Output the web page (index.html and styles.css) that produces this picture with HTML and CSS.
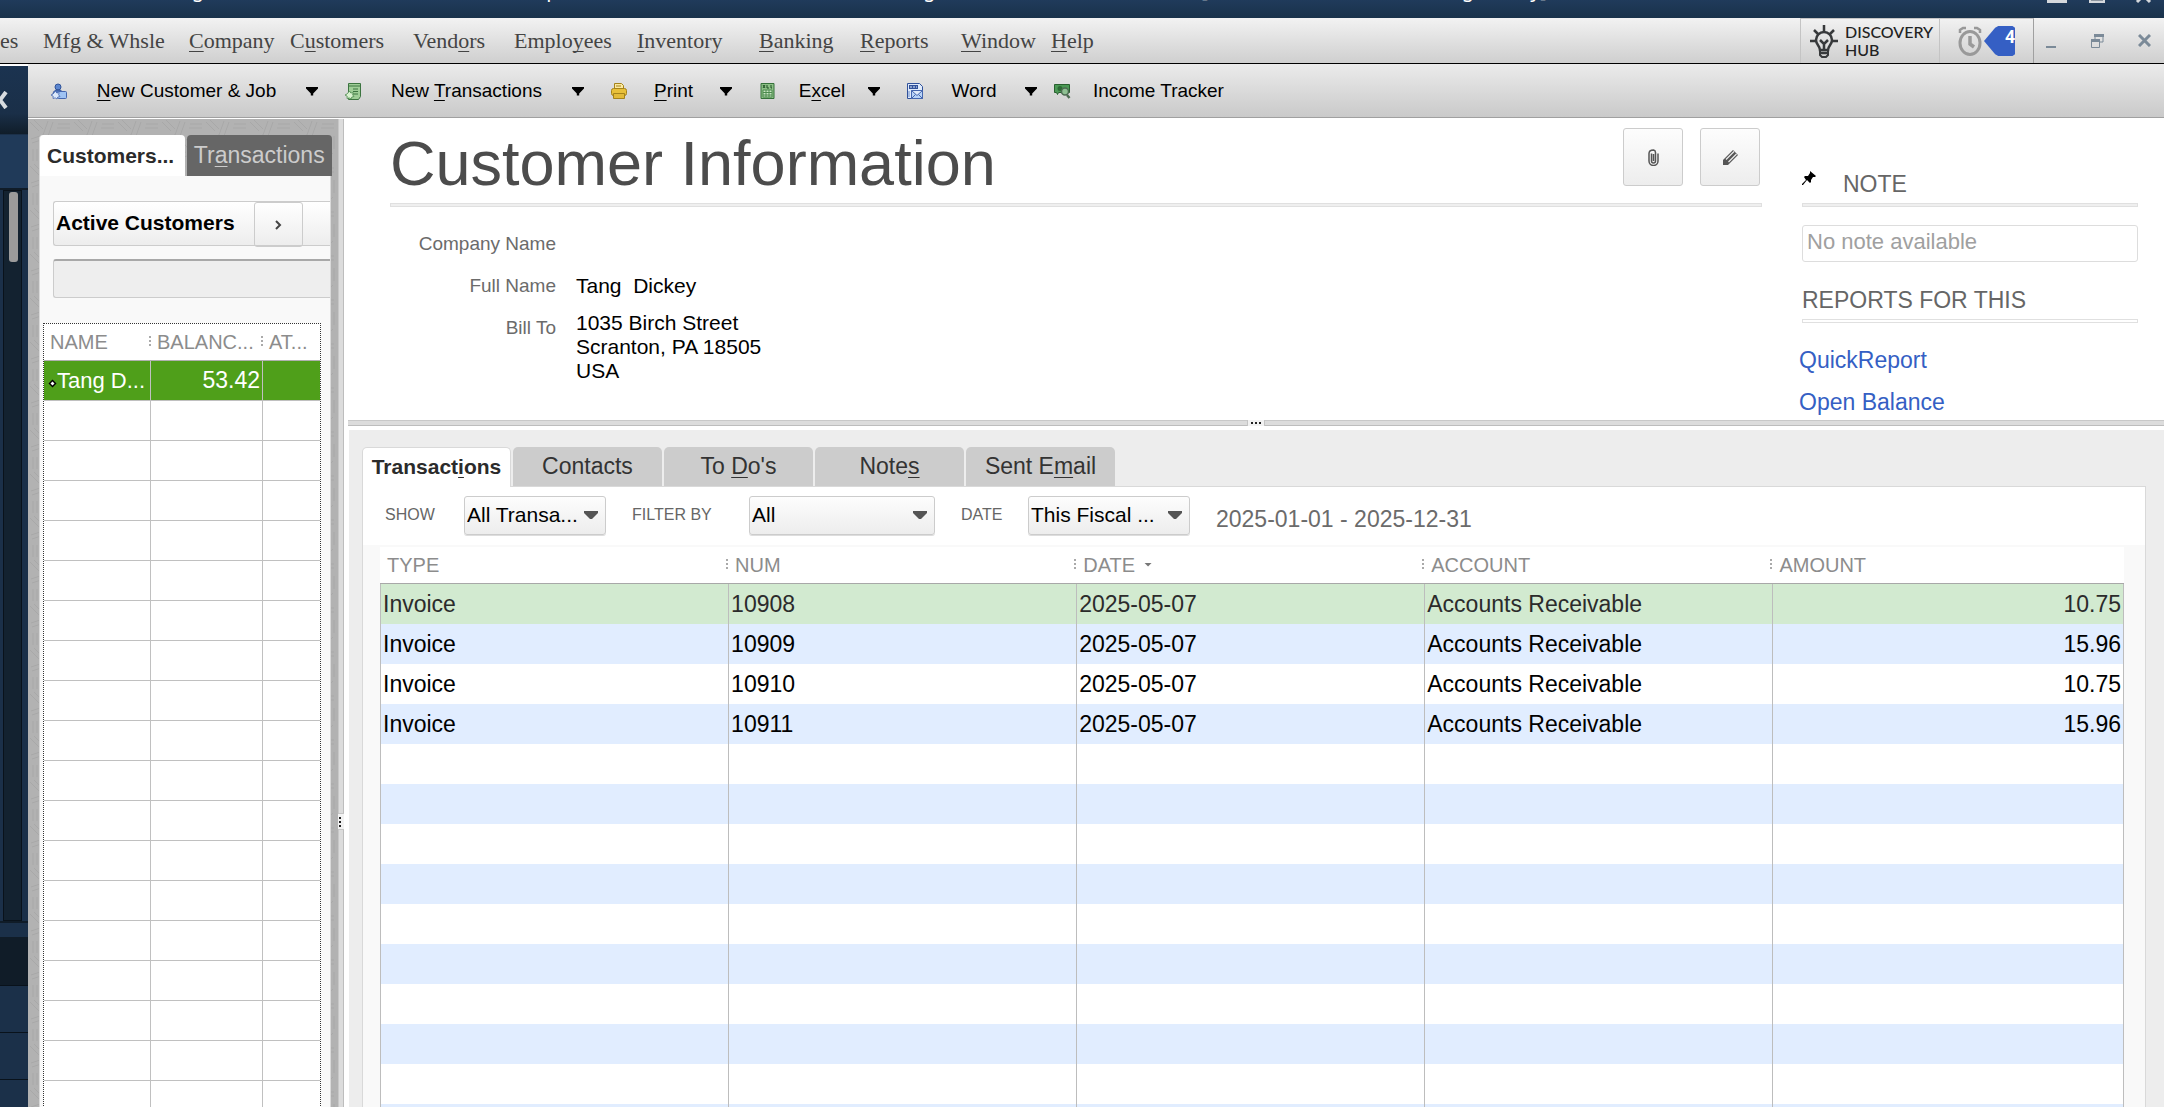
FILE: index.html
```html
<!DOCTYPE html>
<html lang="en">
<head>
<meta charset="utf-8">
<title>Customer Center: Tang Dickey</title>
<link rel="stylesheet" href="styles.css">
</head>
<body>
<div class="app">
  <header class="titlebar">
    <div class="titlebar-text"><span>Trading</span><span>QuickBooks Enterprise</span><span>Manufacturing</span><span>[Customer Information: Tang Dickey]</span></div>
    <svg class="titlebar-buttons" width="106" height="4" viewBox="0 0 106 4" aria-hidden="true"><path fill="#d5d8dc" d="M0 0h20v3H0zM42 0h16v3H42z"/><path fill="#8b949e" d="M44 0h12v1H44z"/><path d="M90 2l3-3M103 2l-3-3" stroke="#d5d8dc" stroke-width="3"/></svg>
  </header>

  <nav class="menubar">
    <ul class="menu">
      <li>es</li>
      <li>Mfg &amp; Whsle</li>
      <li><u>C</u>ompany</li>
      <li>C<u>u</u>stomers</li>
      <li>Vend<u>o</u>rs</li>
      <li>Emplo<u>y</u>ees</li>
      <li><u>I</u>nventory</li>
      <li><u>B</u>anking</li>
      <li><u>R</u>eports</li>
      <li><u>W</u>indow</li>
      <li><u>H</u>elp</li>
    </ul>
    <button class="hub" type="button">
      <svg width="28" height="33" viewBox="0 0 28 33" fill="none" stroke="#37393b" stroke-width="2.5"><path d="M14 0v6M4 5l4 4M24 5l-4 4M0 16h6M22 16h6"/><path d="M10 25c0-4-4-5-4-10a8 8 0 0 1 16 0c0 5-4 6-4 10zM14 24v-6M10 15l4 4 4-4"/><path d="M10 25h8v5l-2 2h-4l-2-2z" stroke-width="2"/><path d="M10 28h8"/></svg>
      <span>DISCOVERY<br>HUB</span>
    </button>
    <button class="alerts" type="button" aria-label="4 reminders">
      <svg width="24" height="31" viewBox="0 0 24 31" fill="none" stroke="#999"><ellipse cx="12" cy="17" rx="10" ry="11.500" stroke-width="3"/><path d="M12 10v8l4 3" stroke-width="3.500"/><path d="M2 7V4l3-2h3M22 7V4l-3-2h-3" stroke-width="2.500"/></svg>
      <span class="badge">4</span>
    </button>
    <div class="window-buttons">
      <button type="button" aria-label="Minimize"><svg width="10" height="14" viewBox="0 0 10 14"><path fill="#7b8a98" d="M0 12h10v2H0z"/></svg></button>
      <button type="button" aria-label="Restore"><svg width="13" height="14" viewBox="0 0 13 14" fill="none" stroke="#7b8a98"><path d="M4 5V2h8v6H9"/><path d="M3 1.500h10M0 6.500h9" stroke-width="3"/><path d="M.5 6v7.500h8V6"/></svg></button>
      <button type="button" aria-label="Close"><svg width="13" height="13" viewBox="0 0 13 13" stroke="#7b8a98" stroke-width="3"><path d="M1 1l11 11M12 1L1 12"/></svg></button>
    </div>
  </nav>

  <div class="workspace">
    <aside class="rail">
      <button class="rail-toggle" type="button" aria-label="Collapse"><svg width="8" height="18" viewBox="0 0 8 18" fill="none" stroke="#d8dce0" stroke-width="4"><path d="M6 1L0 9l6 8"/></svg></button>
      <div class="rail-head"></div>
      <div class="rail-track"><div class="rail-thumb"></div></div>
      <div class="rail-gap"></div>
      <div class="rail-current"></div>
      <div class="rail-item"></div>
      <div class="rail-item"></div>
      <div class="rail-item"></div>
    </aside>

    <div class="center">
      <div class="toolbar">
        <button type="button"><svg width="16" height="17" viewBox="0 0 16 17"><circle cx="7" cy="4" r="3" fill="#5b86cf" stroke="#30539a"/><path d="M2 12c0-4 2-5 5-5s5 1 5 5z" fill="#4d74bd" stroke="#30539a"/><rect x="6.500" y="8.500" width="9" height="7" rx="1" fill="#9fc3f3" stroke="#4566ae"/><path d="M4.500 8l1.300 2 2.400-.4-.6 2.200L9 13.500l-2.200.6L6 16l-1.800-1.100L2 15.500l.2-2.300L0 12l2-1z" fill="#dce9fb" stroke="#4566ae" stroke-width=".8"/></svg><span><u>N</u>ew Customer &amp; Job</span><i class="caret"></i></button>
        <button type="button"><svg width="16" height="17" viewBox="0 0 16 17"><path d="M3.500.5h12v13l-2 3h-10z" fill="#9fce97" stroke="#3c7440"/><path d="M4 3h11M8 6h5M8 8.500h5M8 11h5" stroke="#3c7440"/><path d="M4.500 8l1.300 2 2.400-.4-.6 2.200L9 13.500l-2.200.6L6 16l-1.800-1.100L2 15.500l.2-2.300L0 12l2-1z" fill="#d9f2d0" stroke="#4c8a4e" stroke-width=".8"/></svg><span>New <u>T</u>ransactions</span><i class="caret"></i></button>
        <button type="button"><svg width="16" height="16" viewBox="0 0 16 16" stroke="#a5831a"><path d="M3.500 6V.5h7l2 2V6z" fill="#fbe9a0"/><path d="M5 3h5" /><rect x=".5" y="5.500" width="15" height="7" rx="2" fill="#e8c03a"/><path d="M2.500 10.500h11v5h-11z" fill="#e3bb38"/></svg><span><u>P</u>rint</span><i class="caret"></i></button>
        <button type="button"><svg width="16" height="16" viewBox="0 0 16 16"><path d="M1 .5h13v15H1z" fill="#8cc085" stroke="#35713a"/><path d="M3 2l2 3M5 2L3 5M7 2v3h2M11 2v3h1" stroke="#1f5124" fill="none"/><path d="M3 7h9v7H3z" fill="#c9e6c3" stroke="#4c8a4e"/><path d="M3 9.500h9M3 12h9M6 7v7M9 7v7" stroke="#4c8a4e"/></svg><span>E<u>x</u>cel</span><i class="caret"></i></button>
        <button type="button"><svg width="16" height="16" viewBox="0 0 16 16"><path d="M.5.500h12l3 3v12H.5z" fill="#dfeafa" stroke="#31529b"/><path d="M2 2h9v4H2z" fill="#31529b"/><path d="M3 4h7" stroke="#dfeafa" stroke-dasharray="2 1"/><path d="M2 8v6" stroke="#6f8fcc"/><path d="M4.500 7.500h11v8h-11zM4.500 7.500l5.500 5 5.500-5M4.500 15.500l4-4M15.500 15.500l-4-4" fill="#b8d3f7" stroke="#4566ae"/></svg><span>Word</span><i class="caret"></i></button>
        <button type="button"><svg width="17" height="15" viewBox="0 0 17 15"><path d="M.5.500h15v8h-11l-1 2-1-2h-2z" fill="#4b9955" stroke="#28602f"/><circle cx="6" cy="4.500" r="2.500" fill="#2c6b35"/><circle cx="11" cy="7.500" r="3.500" fill="#8fc193" stroke="#4d6b52" stroke-width="1.500"/><path d="M13 11l2.500 3" stroke="#4d6b52" stroke-width="2.500"/></svg><span>Income Tracker</span></button>
      </div>

      <div class="content">
        <section class="list-pane">
          <div class="list-tabs" role="tablist">
            <button class="is-active" type="button" role="tab">Customers...</button>
            <button type="button" role="tab">Tr<u>a</u>nsactions</button>
          </div>
          <div class="list-body">
            <div class="list-filter">
              <span>Active Customers</span>
              <button type="button" aria-label="More filters"><svg width="7" height="10" viewBox="0 0 7 10" fill="none" stroke="#444" stroke-width="2"><path d="M1 1l4 4-4 4"/></svg></button>
            </div>
            <input class="list-search" type="text" aria-label="Find customer">
            <table class="customers">
              <colgroup><col class="c-name"><col class="c-balance"><col></colgroup>
              <thead><tr><th>NAME</th><th>BALANC...</th><th>AT...</th></tr></thead>
              <tbody>
                <tr class="selected"><td><svg width="9" height="9" viewBox="0 0 9 9"><path d="M4.500.500l4 4-4 4-4-4z" fill="#000"/><path d="M4.500 2.500l2 2-2 2-2-2z" fill="#fff"/></svg>Tang D...</td><td>53.42</td><td></td></tr>
                <tr><td></td><td></td><td></td></tr><tr><td></td><td></td><td></td></tr>
                <tr><td></td><td></td><td></td></tr><tr><td></td><td></td><td></td></tr>
                <tr><td></td><td></td><td></td></tr><tr><td></td><td></td><td></td></tr>
                <tr><td></td><td></td><td></td></tr><tr><td></td><td></td><td></td></tr>
                <tr><td></td><td></td><td></td></tr><tr><td></td><td></td><td></td></tr>
                <tr><td></td><td></td><td></td></tr><tr><td></td><td></td><td></td></tr>
                <tr><td></td><td></td><td></td></tr><tr><td></td><td></td><td></td></tr>
                <tr><td></td><td></td><td></td></tr><tr><td></td><td></td><td></td></tr>
                <tr><td></td><td></td><td></td></tr><tr><td></td><td></td><td></td></tr>
              </tbody>
            </table>
          </div>
        </section>

        <div class="splitter-v"><svg width="6" height="17" viewBox="0 0 6 17"><path d="M0 0h6v17H0z" fill="#f2f2f2"/><path d="M0 .5h6M0 16.500h6" stroke="#c4c4c4"/><path d="M1 4h2v2H1zM1 8h2v2H1zM1 12h2v2H1z" fill="#222"/></svg></div>

        <main class="detail">
          <section class="info">
            <div class="info-main">
              <div class="info-head">
                <h1>Customer Information</h1>
                <button type="button" aria-label="Attach"><svg width="11" height="17" viewBox="0 0 11 17" fill="none" stroke="#555" stroke-width="1.500"><path d="M3.500 4.500v7.500a2 2 0 0 0 4 0V3.500a2.600 2.600 0 0 0-2-2.500C2.500 1 1 2.500 1 4.500v7.500a4.500 4.500 0 0 0 9 0V4.500M5.500 5v7"/></svg></button>
                <button type="button" aria-label="Edit"><svg width="17" height="17" viewBox="0 0 17 17"><path d="M1 16V11L11 1l5 5L6 16z" fill="#555"/><path d="M4 10.500l8-8M6.500 13l8-8" stroke="#eee" stroke-width="1.200"/></svg></button>
              </div>
              <div class="rule"></div>
              <dl class="fields">
                <dt>Company Name</dt><dd></dd>
                <dt>Full Name</dt><dd>Tang&nbsp; Dickey</dd>
                <dt>Bill To</dt><dd class="address">1035 Birch Street<br>Scranton, PA 18505<br>USA</dd>
              </dl>
            </div>
            <div class="info-side">
              <h2 class="note-title"><svg width="14" height="14" viewBox="0 0 14 14"><path d="M8 0l6 5-1 1-2 0-2 3 0 2-1 1-3-3-4 5-1 0 0-1 4-4-2-3 1-1 3 0 2-3z"/></svg><span>NOTE</span></h2>
              <div class="rule"></div>
              <input class="note" type="text" placeholder="No note available" aria-label="Note">
              <h2>REPORTS FOR THIS</h2>
              <div class="rule rule-light"></div>
              <a href="#">QuickReport</a>
              <a href="#">Open Balance</a>
            </div>
          </section>

          <div class="splitter-h"><svg width="18" height="6" viewBox="0 0 18 6"><path d="M0 0h18v6H0z" fill="#f2f2f2"/><path d="M.5 0v6M17.500 0v6" stroke="#c4c4c4"/><path d="M4 2h2v2H4zM8 2h2v2H8zM12 2h2v2h-2z" fill="#222"/></svg></div>

          <section class="lower">
            <div class="tabs" role="tablist">
              <button class="is-active" type="button" role="tab">Transact<u>i</u>ons</button>
              <button type="button" role="tab">Contacts</button>
              <button type="button" role="tab">To <u>D</u>o's</button>
              <button type="button" role="tab">Note<u>s</u></button>
              <button type="button" role="tab">Sent E<u>m</u>ail</button>
            </div>
            <div class="panel">
              <div class="filters">
                <label for="show">SHOW</label>
                <select id="show"><option>All Transa...</option></select>
                <label for="by">FILTER BY</label>
                <select id="by"><option>All</option></select>
                <label for="date">DATE</label>
                <select id="date"><option>This Fiscal ...</option></select>
                <span class="range">2025-01-01 - 2025-12-31</span>
              </div>
              <div class="grid-wrap">
                <table class="transactions">
                  <colgroup><col class="c-equal"><col class="c-equal"><col class="c-equal"><col class="c-equal"><col></colgroup>
                  <thead><tr><th>TYPE</th><th>NUM</th><th>DATE<i class="sort"></i></th><th>ACCOUNT</th><th>AMOUNT</th></tr></thead>
                  <tbody>
                    <tr class="selected"><td>Invoice</td><td>10908</td><td>2025-05-07</td><td>Accounts Receivable</td><td>10.75</td></tr>
                    <tr><td>Invoice</td><td>10909</td><td>2025-05-07</td><td>Accounts Receivable</td><td>15.96</td></tr>
                    <tr><td>Invoice</td><td>10910</td><td>2025-05-07</td><td>Accounts Receivable</td><td>10.75</td></tr>
                    <tr><td>Invoice</td><td>10911</td><td>2025-05-07</td><td>Accounts Receivable</td><td>15.96</td></tr>
                    <tr><td></td><td></td><td></td><td></td><td></td></tr>
                    <tr><td></td><td></td><td></td><td></td><td></td></tr>
                    <tr><td></td><td></td><td></td><td></td><td></td></tr>
                    <tr><td></td><td></td><td></td><td></td><td></td></tr>
                    <tr><td></td><td></td><td></td><td></td><td></td></tr>
                    <tr><td></td><td></td><td></td><td></td><td></td></tr>
                    <tr><td></td><td></td><td></td><td></td><td></td></tr>
                    <tr><td></td><td></td><td></td><td></td><td></td></tr>
                    <tr><td></td><td></td><td></td><td></td><td></td></tr>
                    <tr><td></td><td></td><td></td><td></td><td></td></tr>
                  </tbody>
                </table>
              </div>
            </div>
          </section>
        </main>
      </div>
    </div>
  </div>
</div>
</body>
</html>
```
FILE: styles.css
```css
* { box-sizing: border-box; }

body {
  margin: 0;
  font-family: "Liberation Sans", Arial, sans-serif;
  font-size: 23px;
  color: #000;
}

button, input, select {
  margin: 0;
  padding: 0;
  border: 0;
  background: none;
  font: inherit;
  color: inherit;
}

svg { display: block; flex: none; }

u { text-underline-offset: 3px; text-decoration-thickness: 1px; text-decoration-skip-ink: none; }

.app {
  display: flex;
  flex-direction: column;
  height: 100vh;
  overflow: hidden;
}

/* Title bar: only its lower edge shows */
.titlebar {
  flex: none;
  display: flex;
  justify-content: space-between;
  height: 18px;
  padding-right: 11px;
  overflow: hidden;
  background: linear-gradient(#203b5b, #19324a);
}

.titlebar-text {
  display: grid;
  grid-template-columns: 204px 176px 270px 551px auto;
  height: 28px;
  margin-top: -24px;
  font: 20px/28px "Noto Sans", sans-serif;
  color: #fff;
  white-space: nowrap;
}

.titlebar-text span:nth-child(1) { text-align: right; }
.titlebar-text span:nth-child(2) { grid-column: 3; }
.titlebar-text span:nth-child(3) { grid-column: 4; padding-left: 146px; }
.titlebar-text span:nth-child(4) { grid-column: 5; }

/* Menu bar */
.menubar {
  flex: none;
  display: flex;
  height: 46px;
  border-bottom: 1px solid #000;
  background: linear-gradient(#f2f2f2, #cfcfcf);
}

.menu {
  flex: 1;
  display: grid;
  grid-template-columns: 43px 146px 101px 123px 101px 123px 122px 101px 101px 90px auto;
  margin: 0;
  padding: 0;
  list-style: none;
  font: 22px/46px "Liberation Serif", serif;
  color: #444;
  white-space: nowrap;
}

.hub {
  display: flex;
  align-items: center;
  gap: 7px;
  width: 139px;
  padding-left: 9px;
  border-top: 1px solid #c4c4c4;
  border-left: 1px solid #c4c4c4;
  font: 500 16px/18px Lato, sans-serif;
  text-align: left;
  color: #222;
}

.alerts {
  display: flex;
  align-items: center;
  gap: 2px;
  width: 95px;
  padding-left: 18px;
  border-top: 1px solid #c4c4c4;
  border-left: 1px solid #c4c4c4;
  border-right: 1px solid #a0a0a0;
}

.badge {
  width: 31px;
  height: 30px;
  background: #355fc4;
  clip-path: polygon(0 50%, 36% 6%, 46% 0, 92% 0, 100% 6%, 100% 94%, 92% 100%, 46% 100%, 36% 94%);
  font: bold 17px/22px "Open Sans", sans-serif;
  text-align: right;
  color: #fff;
}

.window-buttons {
  display: flex;
  align-items: center;
  justify-content: space-between;
  width: 130px;
  padding: 0 13px 0 12px;
}

/* Dark rail on the far left */
.workspace { flex: 1; display: flex; min-height: 0; }

.rail {
  flex: none;
  width: 28px;
  border-top: 2px solid #fff;
  background: #1b3049;
}

.rail-toggle {
  display: flex;
  align-items: center;
  width: 28px;
  height: 68px;
  background: linear-gradient(#1b3350, #1a2f48 70%, #101d29);
}

.rail-head {
  height: 56px;
  border-top: 1px solid #1b3049;
  border-bottom: 2px solid #101c28;
  background: #203a59;
}

.rail-track {
  width: 19px;
  height: 731px;
  margin-left: 3px;
  padding: 1px 3px 0 5px;
  border: 1px solid #09121b;
  background: #132230;
}

.rail-thumb { height: 70px; border-radius: 3px; background: #9b9b9b; }
.rail-gap { height: 16px; border-top: 2px solid #101c28; }
.rail-current { height: 48px; background: #101c28; }
.rail-item { height: 47px; border-top: 1px solid #09121b; }

/* Toolbar */
.center { flex: 1; display: flex; flex-direction: column; min-width: 0; }

.toolbar {
  flex: none;
  display: grid;
  grid-template-columns: 294px 266px 149px 147px 147px auto;
  justify-content: start;
  height: 55px;
  padding-left: 23px;
  border-bottom: 1px solid #fff;
  background: linear-gradient(#ebebeb, #c9c9c9);
  box-shadow: inset 0 -1px #a0a0a0;
  font-size: 19px;
}

.toolbar button {
  display: flex;
  align-items: center;
  justify-content: space-between;
  padding-right: 27px;
  white-space: nowrap;
}

.toolbar button:nth-child(3) { padding-right: 28px; }
.toolbar button:nth-child(5) { padding-right: 17px; }
.toolbar button:nth-child(6) { gap: 22px; }

.caret {
  width: 12px;
  height: 9px;
  background: #000;
  clip-path: polygon(0 0, 100% 0, 100% 22%, 60% 78%, 60% 100%, 40% 100%, 40% 78%, 0 22%);
}

/* Customer list */
.content { flex: 1; display: flex; min-height: 0; }

.list-pane {
  flex: none;
  display: flex;
  flex-direction: column;
  width: 310px;
  padding: 16px 6px 0 11px;
  background: #b2b2b2 url("data:image/svg+xml,%3Csvg xmlns='http://www.w3.org/2000/svg' width='44' height='44' fill='none' stroke='%23a8a8a8'%3E%3Cpath d='M2 3l9 9M6 1l9 9M20 2l-5 14M25 3l-5 14M30 5h12M29 9h13M3 20l12-4M4 24l12-4M22 22l8 10M26 20l8 10M38 16v13M42 17v13M5 30v12M9 30v12M14 36l12-3M15 40l12-3M32 42l9-8M28 41l9-8'/%3E%3C/svg%3E");
}

.list-tabs { display: flex; gap: 2px; height: 41px; }

.list-tabs button {
  width: 146px;
  border-radius: 4px 4px 0 0;
  background: #666;
  color: #ccc;
  white-space: nowrap;
}

.list-tabs .is-active {
  padding-left: 7px;
  border-left: 1px solid #d9d9d9;
  background: #fff;
  font-size: 21px;
  font-weight: bold;
  text-align: left;
  color: #2b2b2b;
}

.list-body {
  flex: 1;
  display: flex;
  flex-direction: column;
  min-height: 0;
  width: 292px;
  padding-top: 25px;
  border: solid #d9d9d9;
  border-width: 0 1px;
  background: #f9f9f9;
}

.list-filter {
  flex: none;
  display: flex;
  height: 45px;
  margin-left: 13px;
  border: 1px solid #ccc;
  border-right: 0;
  border-radius: 3px 0 0 3px;
  background: linear-gradient(#fff, #ededed);
  font-size: 21px;
  font-weight: bold;
  line-height: 41px;
  white-space: nowrap;
}

.list-filter span { width: 200px; padding-left: 2px; }

.list-filter button {
  display: flex;
  align-items: center;
  justify-content: center;
  width: 49px;
  height: 45px;
  border: 1px solid #ccc;
  border-radius: 3px;
}

.list-search {
  flex: none;
  height: 39px;
  margin: 13px 0 25px 13px;
  border: 1px solid #ccc;
  border-top: 2px solid #a8a8a8;
  border-right: 0;
  border-radius: 3px 0 0 3px;
  background: #eee;
}

table { table-layout: fixed; border-spacing: 0; }
th { font-size: 20px; font-weight: normal; text-align: left; color: #8c8c8c; }
th, td { padding: 0; white-space: nowrap; overflow: hidden; }

th:not(:last-child) {
  background: repeating-linear-gradient(#aaa 0 2px, transparent 2px 4px) no-repeat right 0 top 12px / 2px 10px;
}

.customers {
  flex: none;
  width: 278px;
  margin-left: 3px;
  border: 1px dotted #333;
  background: #fff;
}

.customers .c-name { width: 107px; }
.customers .c-balance { width: 112px; }
.customers th { height: 37px; padding-left: 6px; border-bottom: 1px solid #b0b0b0; }

.customers td {
  height: 40px;
  border-right: 1px solid #c0c0c0;
  border-bottom: 1px solid #c0c0c0;
  font-size: 22px;
}

.customers td:last-child { border-right: 0; }
.customers td:nth-child(2) { padding-right: 2px; text-align: right; font-size: 23px; }
.customers td:first-child { padding-left: 4px; }
.customers svg { display: inline-block; }
.customers .selected { background: #4f9f1a; color: #fff; }

/* Splitters */
.splitter-v {
  flex: none;
  display: flex;
  align-items: flex-start;
  width: 6px;
  padding-top: 694px;
  background: #dcdcdc;
  box-shadow: inset 1px 0 #c8c8c8, inset -1px 0 #bdbdbd;
}

.splitter-h {
  flex: none;
  display: flex;
  justify-content: center;
  height: 6px;
  margin-bottom: 4px;
  background: #dcdcdc;
  box-shadow: inset 0 1px #c8c8c8, inset 0 -1px #bdbdbd;
}

/* Customer information */
.detail {
  flex: 1;
  display: flex;
  flex-direction: column;
  min-width: 0;
  padding-left: 4px;
  background: #fff;
}

.info {
  flex: 0 0 301px;
  display: flex;
  gap: 40px;
  overflow: hidden;
  padding: 0 26px 0 42px;
}

.info-main { flex: 1; }

.info-head { display: flex; gap: 17px; height: 84px; padding: 9px 2px 0 0; }

h1 {
  flex: 1;
  margin: 3px 0 0;
  font-size: 63px;
  font-weight: normal;
  line-height: 64px;
  color: #4c4c4c;
}

.info-head button {
  display: flex;
  align-items: center;
  justify-content: center;
  width: 60px;
  height: 58px;
  border: 1px solid #ccc;
  border-radius: 3px;
  background: linear-gradient(#fdfdfd, #ededed);
}

.rule { height: 4px; border: 1px solid #e0e0e0; background: #efefef; }
.rule-light { background: #fff; }

.fields {
  display: grid;
  grid-template-columns: 166px auto;
  column-gap: 20px;
  margin: 0;
  padding-top: 16px;
  font-size: 21px;
  line-height: 42px;
}

.fields dt { text-align: right; font-size: 19px; color: #6b6b6b; }
.fields dd { margin: 0; min-height: 42px; }
.fields .address { padding-top: 4px; line-height: 24px; }

.info-side { flex: 0 0 336px; padding-top: 51px; }

h2 {
  margin: 0 0 5px;
  font-size: 23px;
  font-weight: normal;
  line-height: 28px;
  color: #666;
}

.note-title { display: flex; gap: 27px; }
.note-title svg { margin-top: 1px; }

.note {
  display: block;
  width: 100%;
  height: 37px;
  margin: 18px 0 24px;
  padding: 0 4px 3px;
  border: 1px solid #ddd;
  border-radius: 3px;
  background: #fff;
  font-size: 22px;
}

.note::placeholder { color: #a0a0a0; }

.info-side .rule-light { margin-bottom: 16px; }

.info-side a {
  display: block;
  margin-left: -3px;
  line-height: 42px;
  color: #355fc4;
  text-decoration: none;
}

/* Transactions */
.lower {
  flex: 1;
  display: flex;
  flex-direction: column;
  min-height: 0;
  margin-left: 1px;
  padding: 17px 18px 0 13px;
  background: #ededed;
}

.tabs { display: flex; gap: 2px; height: 39px; }

.tabs button {
  width: 149px;
  border-radius: 5px 5px 0 0;
  background: #ccc;
  color: #333;
}

.tabs .is-active {
  position: relative;
  z-index: 1;
  height: 40px;
  padding-bottom: 2px;
  border: 1px solid #d9d9d9;
  border-bottom: 0;
  background: #fff;
  font-size: 21px;
  font-weight: bold;
  color: #2b2b2b;
}

.panel {
  flex: 1;
  display: flex;
  flex-direction: column;
  min-height: 0;
  border: 1px solid #d9d9d9;
  border-bottom: 0;
  background: #fff;
}

.filters {
  flex: none;
  display: grid;
  grid-template-columns: 79px 168px 117px 212px 67px 188px auto;
  align-items: center;
  height: 58px;
  padding: 0 0 2px 22px;
}

.filters label { font-size: 16px; color: #666; }

.filters select {
  height: 39px;
  margin-right: 26px;
  padding: 0 0 2px 2px;
  appearance: none;
  border: 1px solid #ccc;
  border-radius: 3px;
  box-shadow: 0 1px #ddd;
  background:
    url("data:image/svg+xml,%3Csvg xmlns='http://www.w3.org/2000/svg' width='14' height='9'%3E%3Cpath d='M0 0h14v2L8 8H6L0 2z' fill='%23555'/%3E%3C/svg%3E") no-repeat right 7px center,
    linear-gradient(#fdfdfd, #ededed);
  font-size: 21px;
}

.range { padding-top: 8px; color: #6b6b6b; }

.grid-wrap {
  flex: 1;
  min-height: 0;
  overflow: hidden;
  padding: 2px 21px 0 17px;
  background: #f9f9f9;
}

.transactions { width: 100%; background: #fff; }
.transactions .c-equal { width: 19.96%; }
.transactions th { height: 37px; padding-left: 7px; border-bottom: 1px solid #a8a8a8; }

.transactions td {
  height: 40px;
  padding-left: 2px;
  border-left: 1px solid #bdbdbd;
}

.transactions td:last-child { padding-right: 2px; border-right: 1px solid #bdbdbd; text-align: right; }
.transactions tbody tr:nth-child(even) { background: #e1edff; }
.transactions .selected { background: #d2ead0; color: #2b2b2b; }

.sort {
  display: inline-block;
  width: 8px;
  height: 4px;
  margin: 0 0 5px 9px;
  background: #777;
  clip-path: polygon(0 0, 100% 0, 50% 100%);
}
```
